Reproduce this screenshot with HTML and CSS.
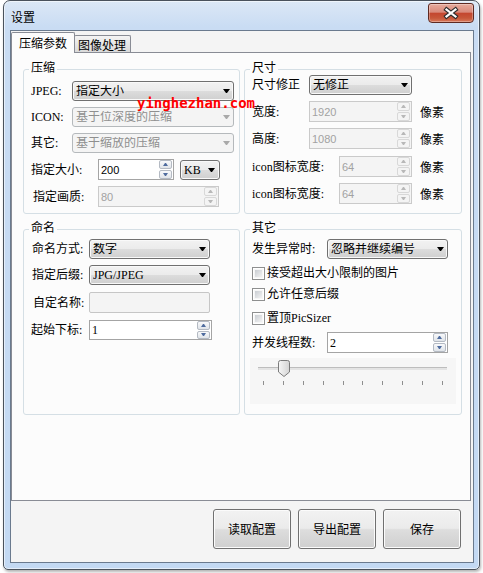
FILE: index.html
```html
<!DOCTYPE html>
<html lang="zh-CN">
<head>
<meta charset="utf-8">
<title>设置</title>
<link rel="stylesheet" href="styles.css">
</head>
<body>
<div class="window">
  <div class="titlebar">
    <span class="title">设置</span>
    <div class="close">
      <svg width="44" height="18" viewBox="0 0 44 18"><path d="M17.5 5.5 L26.5 12.5 M26.5 5.5 L17.5 12.5" stroke="#2e2e2e" stroke-width="4.4" stroke-linecap="square" fill="none"/><path d="M17.5 5.5 L26.5 12.5 M26.5 5.5 L17.5 12.5" stroke="#ffffff" stroke-width="2.2" stroke-linecap="square" fill="none"/></svg>
    </div>
  </div>
  <div class="client">
    <div class="tabs">
      <div class="tab tab-on">压缩参数</div>
      <div class="tab tab-off">图像处理</div>
    </div>
    <div class="panel">
      <section class="group g1">
        <span class="gtitle">压缩</span>
        <div class="row"><span class="lbl l41">JPEG:</span><div class="combo c162"><span class="ctext">指定大小</span><span class="carrow"></span></div></div>
        <div class="row"><span class="lbl l41">ICON:</span><div class="combo c162 dis"><span class="ctext">基于位深度的压缩</span><span class="carrow"></span></div></div>
        <div class="row"><span class="lbl l41">其它:</span><div class="combo c162 dis"><span class="ctext">基于缩放的压缩</span><span class="carrow"></span></div></div>
        <div class="row"><span class="lbl l67">指定大小:</span><div class="spin s76"><span class="sval num">200</span><span class="sbtns"><i class="up"></i><i class="dn"></i></span></div><div class="combo c40 ml6"><span class="ctext">KB</span><span class="carrow"></span></div></div>
        <div class="row"><span class="lbl l67 pl2">指定画质:</span><div class="spin s121 dis"><span class="sval num">80</span><span class="sbtns"><i class="up"></i><i class="dn"></i></span></div></div>
      </section>

      <section class="group g2">
        <span class="gtitle">尺寸</span>
        <div class="row"><span class="lbl l57">尺寸修正</span><div class="combo c103"><span class="ctext">无修正</span><span class="carrow"></span></div></div>
        <div class="row"><span class="lbl l57">宽度:</span><div class="spin s103 dis"><span class="sval num">1920</span><span class="sbtns"><i class="up"></i><i class="dn"></i></span></div><span class="unit">像素</span></div>
        <div class="row"><span class="lbl l57">高度:</span><div class="spin s103 dis"><span class="sval num">1080</span><span class="sbtns"><i class="up"></i><i class="dn"></i></span></div><span class="unit">像素</span></div>
        <div class="row mt1"><span class="lbl l87">icon图标宽度:</span><div class="spin s73 dis"><span class="sval num">64</span><span class="sbtns"><i class="up"></i><i class="dn"></i></span></div><span class="unit">像素</span></div>
        <div class="row"><span class="lbl l87">icon图标宽度:</span><div class="spin s73 dis"><span class="sval num">64</span><span class="sbtns"><i class="up"></i><i class="dn"></i></span></div><span class="unit">像素</span></div>
      </section>

      <section class="group g3">
        <span class="gtitle">命名</span>
        <div class="row"><span class="lbl l58 pl1">命名方式:</span><div class="combo c121"><span class="ctext">数字</span><span class="carrow"></span></div></div>
        <div class="row"><span class="lbl l58 pl1">指定后缀:</span><div class="combo c121"><span class="ctext">JPG/JPEG</span><span class="carrow"></span></div></div>
        <div class="row mt1"><span class="lbl l58 pl2">自定名称:</span><div class="edit c121"></div></div>
        <div class="row mt1"><span class="lbl l58">起始下标:</span><div class="spin s123 h20"><span class="sval">1</span><span class="sbtns"><i class="up"></i><i class="dn"></i></span></div></div>
      </section>

      <section class="group g4">
        <span class="gtitle">其它</span>
        <div class="row"><span class="lbl l75">发生异常时:</span><div class="combo c121"><span class="ctext">忽略并继续编号</span><span class="carrow"></span></div></div>
        <div class="cb mt4"><span class="box"></span><span class="cbl">接受超出大小限制的图片</span></div>
        <div class="cb mt1"><span class="box"></span><span class="cbl">允许任意后缀</span></div>
        <div class="cb mt4"><span class="box"></span><span class="cbl">置顶PicSizer</span></div>
        <div class="row mt4"><span class="lbl l75">并发线程数:</span><div class="spin s121"><span class="sval">2</span><span class="sbtns"><i class="up"></i><i class="dn"></i></span></div></div>
        <div class="slider">
          <div class="track">
            <svg class="thumb" width="12" height="17" viewBox="0 0 12 17"><defs><linearGradient id="tg" x1="0" y1="0" x2="1" y2="0"><stop offset="0" stop-color="#f6f6f6"/><stop offset="1" stop-color="#d4d4d4"/></linearGradient></defs><path d="M0.5 2.5 Q0.5 0.5 2.5 0.5 H9.5 Q11.5 0.5 11.5 2.5 V12 L6 16.5 L0.5 12 Z" fill="url(#tg)" stroke="#7b7b7b"/></svg>
          </div>
          <div class="ticks"><i></i><i></i><i></i><i></i><i></i><i></i><i></i><i></i><i></i><i></i></div>
        </div>
      </section>
    </div>
    <div class="footer">
      <button class="btn">读取配置</button>
      <button class="btn">导出配置</button>
      <button class="btn">保存</button>
    </div>
  </div>
</div>
<div class="watermark">yinghezhan.com</div>
</body>
</html>
```

FILE: styles.css
```css
html, body {
  margin: 0;
  padding: 0;
}
body {
  background: #ffffff;
  width: 483px;
  height: 573px;
  overflow: hidden;
  font-family: "Liberation Serif", "Noto Sans CJK SC", serif;
  font-size: 12px;
  line-height: 12px;
  color: #000;
}

/* window frame */
.window {
  box-sizing: border-box;
  width: 477px;
  height: 570px;
  margin-left: 3px;
  border: 1px solid #4a525c;
  border-radius: 7px 7px 5px 5px;
  background: linear-gradient(180deg, #dce8f6 0, #c9dcf3 26px, #c3d9f3 100%);
  box-shadow: inset 0 0 0 1px rgba(255,255,255,0.55), 1px 2px 3px rgba(0,0,0,0.3);
  display: flex;
  flex-direction: column;
}
.titlebar {
  height: 29px;
  flex: none;
  display: flex;
  align-items: flex-start;
}
.title {
  margin: 10px 0 0 7px;
  font-family: "Noto Sans CJK SC", sans-serif;
}
.close {
  margin: 2px 5px 0 auto;
  width: 46px;
  height: 20px;
  box-sizing: border-box;
  border: 1px solid #5e2a22;
  border-radius: 3px 3px 4px 4px;
  background: linear-gradient(180deg, #e7ab9d 0%, #d98a7b 45%, #c4472f 52%, #c65739 78%, #d9795b 100%);
  box-shadow: inset 0 0 0 1px rgba(255,255,255,0.3);
}
.close svg { display: block; }

.client {
  flex: 1;
  margin: 0 5px 6px 6px;
  border: 1px solid #6a7a8e;
  background: #f4f4f4;
  display: flex;
  flex-direction: column;
}

/* tabs */
.tabs {
  display: flex;
  align-items: flex-end;
  margin-top: 1px;
  height: 20px;
  flex: none;
}
.tab {
  box-sizing: border-box;
  border: 1px solid #898c95;
  border-bottom: none;
  border-radius: 2px 2px 0 0;
  font-family: "Noto Sans CJK SC", sans-serif;
  white-space: nowrap;
}
.tab-on {
  height: 21px;
  margin-bottom: -1px;
  padding: 4px 7px 0;
  background: #fcfcfc;
  position: relative;
  z-index: 1;
}
.tab-off {
  height: 17px;
  margin-left: -1px;
  padding: 3px 4px 0 3px;
  background: linear-gradient(180deg, #f4f4f4, #e6e6e6 50%, #dadada);
}

/* tab panel */
.panel {
  box-sizing: border-box;
  height: 449px;
  flex: none;
  margin-right: 2px;
  border: 1px solid #898c95;
  background: #fcfcfc;
  padding: 16px 0 0 11px;
  display: grid;
  grid-template-columns: 217px 218px;
  grid-template-rows: 145px 186px;
  column-gap: 4px;
  row-gap: 15px;
  align-content: start;
}

.group {
  box-sizing: border-box;
  border: 1px solid #d5dfe5;
  border-radius: 3px;
  position: relative;
  display: flex;
  flex-direction: column;
  gap: 6px;
  padding-left: 7px;
}
.g1 { padding-top: 11px; }
.g2 { padding-top: 5px; }
.g3 { padding-top: 9px; }
.g4 { padding-top: 9px; gap: 0; }
.gtitle {
  position: absolute;
  top: -9px;
  left: 5px;
  padding: 0 2px;
  background: #fcfcfc;
  font-family: "Noto Sans CJK SC", sans-serif;
}

.row {
  display: flex;
  align-items: center;
}
.lbl { flex: none; white-space: nowrap; }
.l41 { width: 41px; }
.l57 { width: 57px; }
.l58 { width: 58px; }
.l67 { width: 67px; }
.l75 { width: 75px; }
.l87 { width: 87px; }
.pl1 { box-sizing: border-box; padding-left: 1px; }
.pl2 { box-sizing: border-box; padding-left: 2px; }
.mt1 { margin-top: 1px; }
.mt4 { margin-top: 4px; }
.ml6 { margin-left: 6px; }
.unit {
  margin-left: 8px;
  font-family: "Noto Sans CJK SC", sans-serif;
}

/* combo boxes */
.combo {
  box-sizing: border-box;
  height: 20px;
  flex: none;
  display: flex;
  align-items: center;
  border: 1px solid #707070;
  border-radius: 3px;
  background: linear-gradient(180deg, #f2f2f2 0%, #ebebeb 50%, #dddddd 50%, #cfcfcf 100%);
  box-shadow: inset 0 0 0 1px #f9f9f9;
  padding: 0 3px 0 3px;
}
.ctext { flex: 1; white-space: nowrap; overflow: hidden; }
.carrow {
  width: 1px;
  height: 0;
  border-left: 3px solid transparent;
  border-right: 3px solid transparent;
  border-top: 4px solid #000;
}
.combo.dis {
  border-color: #b5b9bc;
  background: #f4f4f4;
  box-shadow: none;
  color: #8f8f8f;
}
.combo.dis .carrow { border-top-color: #a9a9a9; }
.c40 { width: 40px; padding-right: 4px; }
.c103 { width: 103px; }
.c121 { width: 121px; }
.c162 { width: 162px; }

/* text edit */
.edit {
  box-sizing: border-box;
  height: 21px;
  flex: none;
  border: 1px solid #c6c6c6;
  border-radius: 2px;
  background: #f4f4f4;
}

/* spin boxes */
.spin {
  box-sizing: border-box;
  height: 21px;
  flex: none;
  display: flex;
  border: 1px solid #a4a4a4;
  background: #ffffff;
  padding: 0 1px 0 1px;
}
.spin.h20 { height: 20px; }
.s73 { width: 73px; }
.s76 { width: 76px; }
.s103 { width: 103px; }
.s121 { width: 121px; }
.s123 { width: 123px; }
.sval {
  flex: 1;
  align-self: center;
  padding-left: 1px;
  white-space: nowrap;
}
.num {
  font-family: "Liberation Sans", sans-serif;
  font-size: 11px;
}
.sbtns {
  width: 13px;
  flex: none;
  display: flex;
  flex-direction: column;
  gap: 1px;
}
.sbtns i {
  flex: 1;
  box-sizing: border-box;
  display: flex;
  align-items: center;
  justify-content: center;
  border: 1px solid #b4bac3;
  border-radius: 2px;
  background: linear-gradient(180deg, #f8f9fb, #e0e4e9);
}
.up::after, .dn::after {
  content: "";
  width: 1px;
  height: 0;
  border-left: 2px solid transparent;
  border-right: 2px solid transparent;
}
.up::after { border-bottom: 3px solid #4f6c9f; }
.dn::after { border-top: 3px solid #4f6c9f; }
.spin.dis {
  border-color: #cacaca;
  background: #f4f4f4;
  color: #a2a2a2;
}
.spin.dis .sbtns i {
  border-color: #d8d8d8;
  background: #f4f4f4;
}
.spin.dis .up::after { border-bottom-color: #b8b8b8; }
.spin.dis .dn::after { border-top-color: #b8b8b8; }

/* checkboxes */
.cb {
  display: flex;
  align-items: center;
  height: 20px;
}
.box {
  box-sizing: border-box;
  width: 13px;
  height: 13px;
  flex: none;
  border: 1px solid #8e8f8f;
  padding: 2px;
  background: linear-gradient(135deg, #c9cdd2, #f3f3f3) content-box, #f6f6f6;
  box-shadow: inset 0 0 0 1px #ffffff;
}
.cbl {
  margin-left: 2px;
  white-space: nowrap;
}

/* slider */
.slider {
  box-sizing: border-box;
  width: 206px;
  height: 46px;
  margin: 5px 0 0 -2px;
  padding: 9px 9px 0 8px;
  background: #f6f6f6;
}
.track {
  position: relative;
  box-sizing: border-box;
  height: 3px;
  border-top: 1px solid #bdbdbd;
  background: #e4e4e4;
}
.thumb {
  position: absolute;
  left: 20px;
  top: -8px;
  display: block;
}
.ticks {
  display: flex;
  justify-content: space-between;
  margin: 11px 4px 0 5px;
  height: 4px;
}
.ticks i {
  width: 1px;
  height: 4px;
  background: #8e8e8e;
}

/* footer */
.footer {
  flex: 1;
  display: flex;
  justify-content: flex-end;
  align-items: flex-start;
  gap: 7px;
  padding: 8px 12px 0 0;
}
.btn {
  box-sizing: border-box;
  width: 78px;
  height: 40px;
  margin: 0;
  padding: 0;
  border: 1px solid #707070;
  border-radius: 3px;
  background: linear-gradient(180deg, #f2f2f2 0%, #ebebeb 48%, #dddddd 52%, #cfcfcf 100%);
  box-shadow: inset 0 0 0 1px #fbfbfb;
  font-family: "Noto Sans CJK SC", sans-serif;
  font-size: 12px;
  line-height: 12px;
  color: #000;
  display: flex;
  align-items: center;
  justify-content: center;
}

/* watermark overlay */
.watermark {
  position: absolute;
  left: 137px;
  top: 96px;
  font-family: "DejaVu Sans Mono", monospace;
  font-weight: bold;
  font-size: 14px;
  line-height: 14px;
  color: #ff0000;
  white-space: nowrap;
}
```
